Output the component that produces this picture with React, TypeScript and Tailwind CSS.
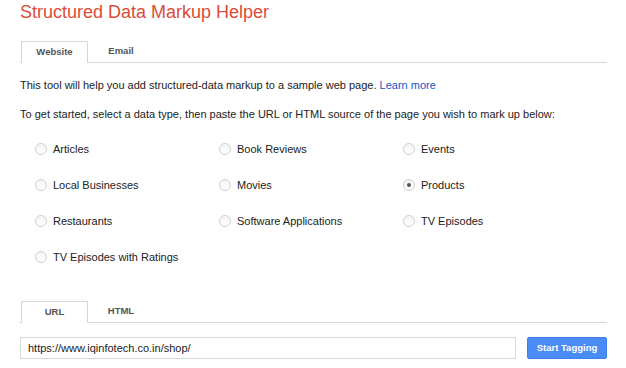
import React from "react";

const options: { label: string; checked?: boolean }[] = [
  { label: "Articles" },
  { label: "Book Reviews" },
  { label: "Events" },
  { label: "Local Businesses" },
  { label: "Movies" },
  { label: "Products", checked: true },
  { label: "Restaurants" },
  { label: "Software Applications" },
  { label: "TV Episodes" },
  { label: "TV Episodes with Ratings" },
];

function Radio({ checked }: { checked?: boolean }) {
  return (
    <span className="flex h-[12px] w-[12px] shrink-0 items-center justify-center rounded-full border border-[#cfcfcf] bg-gradient-to-b from-[#f4f4f4] to-white">
      {checked && <span className="h-[4px] w-[4px] rounded-full bg-[#555]" />}
    </span>
  );
}

function Tabs({ first, second }: { first: string; second: string }) {
  return (
    <div className="flex h-[22px] border-b border-[#d6d6d6] pl-[1px]">
      <div className="-mb-[1px] flex w-[67px] items-center justify-center border-x border-t border-[#d6d6d6] bg-white text-[9.5px] font-bold text-[#555]">
        {first}
      </div>
      <div className="flex w-[66px] items-center justify-center text-[9.5px] font-bold text-[#555]">
        {second}
      </div>
    </div>
  );
}

export default function App() {
  return (
    <div
      className="h-[368px] w-[626px] overflow-hidden bg-white pl-[20px] pr-[19px] text-[#222]"
      style={{ fontFamily: '"Liberation Sans", Arial, sans-serif' }}
    >
      <h1 className="h-[24px] text-[18px] leading-[24px] text-[#dd4b39]">
        Structured Data Markup Helper
      </h1>
      <div className="mt-[17px]">
        <Tabs first="Website" second="Email" />
      </div>
      <p className="mt-[15px] text-[11px] leading-[14px]">
        This tool will help you add structured-data markup to a sample web page.{" "}
        <span className="text-[#1155cc]">Learn more</span>
      </p>
      <p className="mt-[15px] text-[11px] leading-[14px]">
        To get started, select a data type, then paste the URL or HTML source of the page you wish to mark up below:
      </p>
      <div className="mt-[10px] grid grid-cols-[184px_184px_1fr] pl-[15px]">
        {options.map((o) => (
          <label key={o.label} className="flex h-[36px] items-center gap-[6px] text-[11px]">
            <Radio checked={o.checked} />
            <span>{o.label}</span>
          </label>
        ))}
      </div>
      <div className="mt-[26px]">
        <Tabs first="URL" second="HTML" />
      </div>
      <div className="mt-[14px] flex gap-[11px]">
        <div className="flex h-[22px] flex-1 items-center border border-[#d9d9d9] px-[7px] text-[11px] text-[#222]">
          https://www.iqinfotech.co.in/shop/
        </div>
        <button className="h-[22px] w-[80px] rounded-[2px] border border-[#3b7ff0] bg-[#4a8cf5] text-[9.5px] font-bold text-white">
          Start Tagging
        </button>
      </div>
    </div>
  );
}
